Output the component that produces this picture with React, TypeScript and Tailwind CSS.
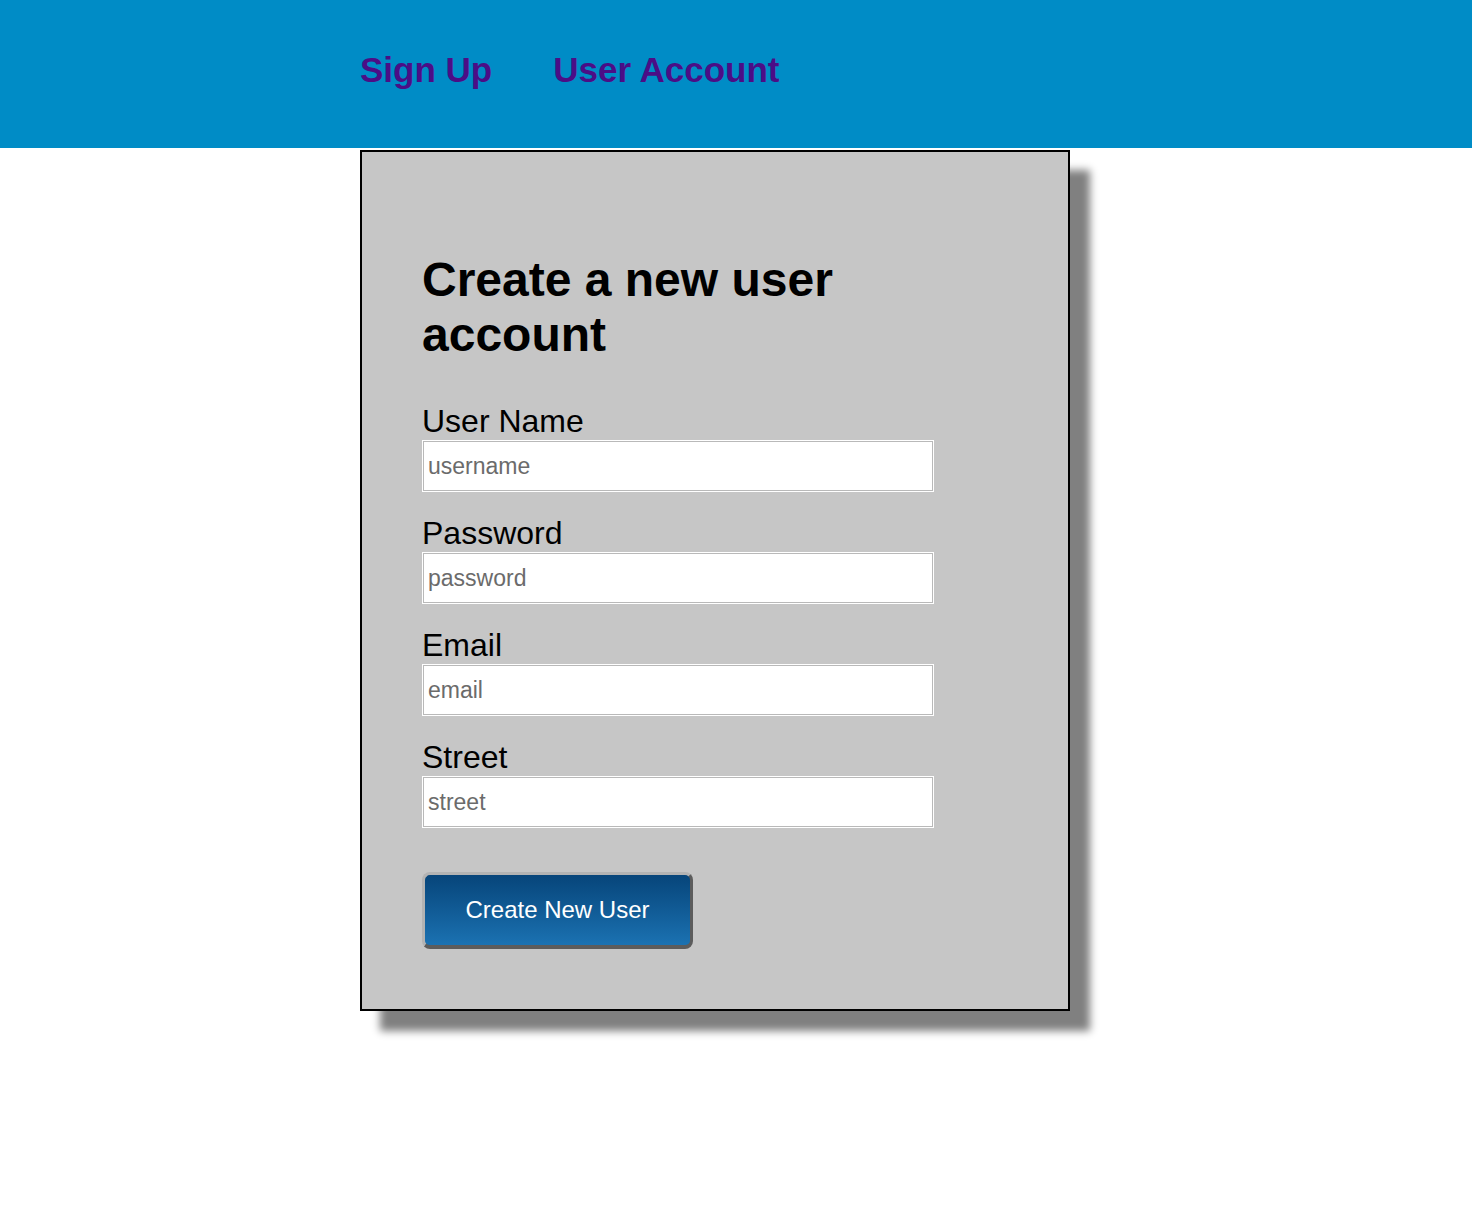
import React from 'react';

const fields = [
  { label: 'User Name', placeholder: 'username', type: 'text' },
  { label: 'Password', placeholder: 'password', type: 'password' },
  { label: 'Email', placeholder: 'email', type: 'email' },
  { label: 'Street', placeholder: 'street', type: 'text' },
];

export default function App() {
  return (
    <div className="min-h-[1232px] bg-white font-['Liberation_Sans',Arial,sans-serif]">
      <header className="h-[148px] bg-[#008cc6]">
        <nav className="flex gap-[61px] pl-[360px] pt-[50px]">
          <a href="#" className="text-[35px] font-bold leading-[40px] text-[#4b0e86]">Sign Up</a>
          <a href="#" className="text-[35px] font-bold leading-[40px] text-[#4b0e86]">User Account</a>
        </nav>
      </header>

      <main className="pl-[360px] pt-[2px]">
        <div className="w-[710px] border-2 border-black bg-[#c6c6c6] px-[60px] pb-[60px] pt-[100px] shadow-[20px_20px_8px_#808080]">
          <h1 className="mb-[41px] text-[48px] font-bold leading-[55px] text-black">
            Create a new user
            <br />
            account
          </h1>
          <form className="flex flex-col gap-[23px]" onSubmit={(e) => e.preventDefault()}>
            {fields.map((f) => (
              <label key={f.label} className="flex flex-col">
                <span className="text-[32px] leading-[37px] text-black">{f.label}</span>
                <input
                  type={f.type === 'password' ? 'text' : f.type}
                  placeholder={f.placeholder}
                  className="h-[52px] w-[512px] border border-white bg-white px-[5px] text-[23px] text-black shadow-[inset_0_0_0_1px_#b9b9b9] outline-none placeholder:text-[#6b6b6b]"
                />
              </label>
            ))}
            <div className="pt-[21px]">
              <button
                type="submit"
                className="h-[77px] w-[271px] rounded-[8px] border-[3px] border-b-4 border-l-[#b3b3b3] border-t-[#b3b3b3] border-r-[#5c5c5c] border-b-[#5c5c5c] bg-gradient-to-b from-[#07457a] to-[#1b72b2] text-[24px] text-white"
              >
                Create New User
              </button>
            </div>
          </form>
        </div>
      </main>
    </div>
  );
}
